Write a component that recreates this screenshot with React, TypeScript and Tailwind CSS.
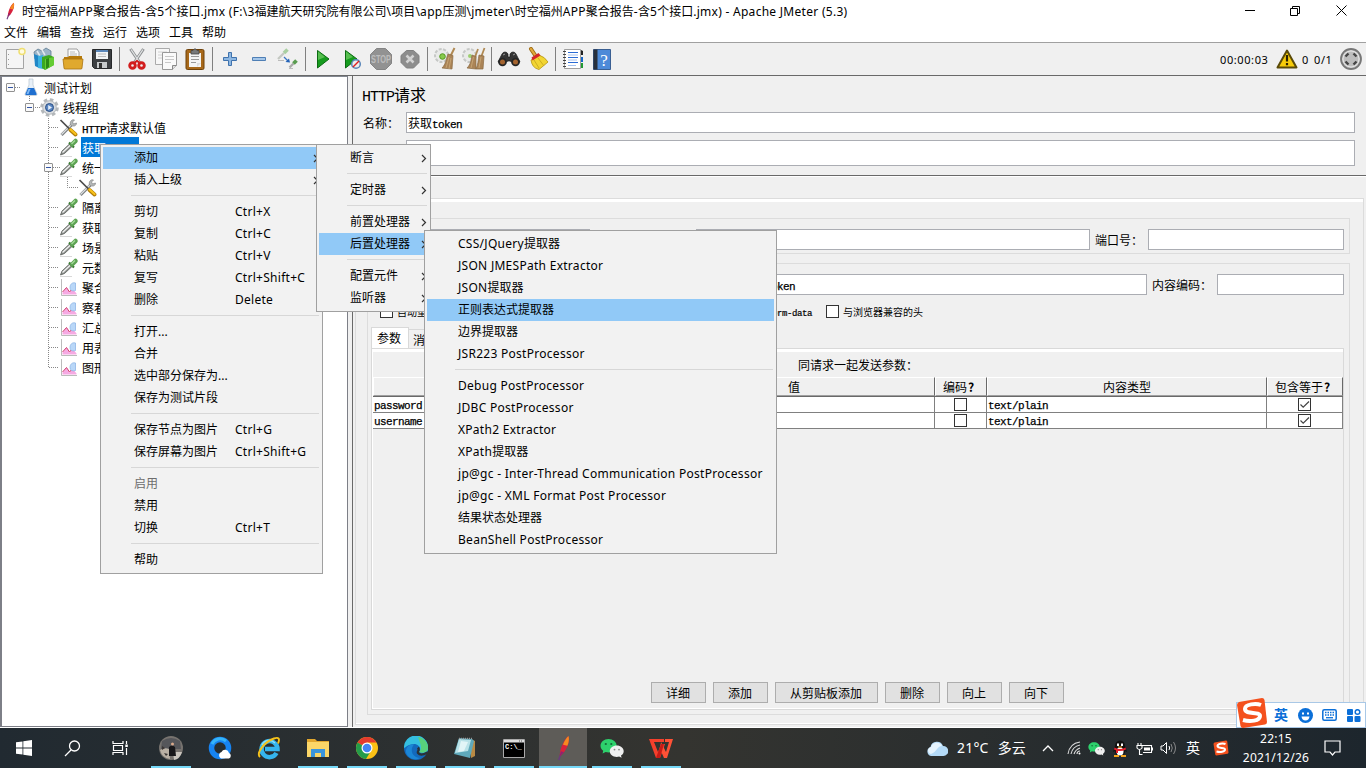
import type { ReactNode } from "react";
import clsx from "clsx";

type MenuEntry = {
  label?: string;
  shortcut?: string;
  arrow?: boolean;
  active?: boolean;
  disabled?: boolean;
};

const SEPARATOR: MenuEntry = {};

const contextMenu: MenuEntry[] = [
  { label: "添加", arrow: true, active: true },
  { label: "插入上级", arrow: true },
  SEPARATOR,
  { label: "剪切", shortcut: "Ctrl+X" },
  { label: "复制", shortcut: "Ctrl+C" },
  { label: "粘贴", shortcut: "Ctrl+V" },
  { label: "复写", shortcut: "Ctrl+Shift+C" },
  { label: "删除", shortcut: "Delete" },
  SEPARATOR,
  { label: "打开..." },
  { label: "合并" },
  { label: "选中部分保存为..." },
  { label: "保存为测试片段" },
  SEPARATOR,
  { label: "保存节点为图片", shortcut: "Ctrl+G" },
  { label: "保存屏幕为图片", shortcut: "Ctrl+Shift+G" },
  SEPARATOR,
  { label: "启用", disabled: true },
  { label: "禁用" },
  { label: "切换", shortcut: "Ctrl+T" },
  SEPARATOR,
  { label: "帮助" },
];

const addMenu: MenuEntry[] = [
  { label: "断言", arrow: true },
  SEPARATOR,
  { label: "定时器", arrow: true },
  SEPARATOR,
  { label: "前置处理器", arrow: true },
  { label: "后置处理器", arrow: true, active: true },
  SEPARATOR,
  { label: "配置元件", arrow: true },
  { label: "监听器", arrow: true },
];

const postProcessorMenu: MenuEntry[] = [
  { label: "CSS/JQuery提取器" },
  { label: "JSON JMESPath Extractor" },
  { label: "JSON提取器" },
  { label: "正则表达式提取器", active: true },
  { label: "边界提取器" },
  { label: "JSR223 PostProcessor" },
  SEPARATOR,
  { label: "Debug PostProcessor" },
  { label: "JDBC PostProcessor" },
  { label: "XPath2 Extractor" },
  { label: "XPath提取器" },
  { label: "jp@gc - Inter-Thread Communication PostProcessor" },
  { label: "jp@gc - XML Format Post Processor" },
  { label: "结果状态处理器" },
  { label: "BeanShell PostProcessor" },
];

const MONO = "text-[11px] tracking-[-0.6px] [-webkit-text-stroke:0.25px_currentColor]";

// Swing text: full-width glyphs at the font size, latin ones at half of it
const Sun = ({ children, latin = MONO }: { children: string; latin?: string }) => (
  <span className="whitespace-nowrap">
    {children.split(/([\x20-\x7e]+)/).map((part, i) =>
      i % 2 ? (
        <span key={i} className={clsx("font-['Liberation_Mono',monospace] leading-none", latin)}>
          {part}
        </span>
      ) : (
        part
      )
    )}
  </span>
);

// native window text, latin runs are set a little wider
const Ui = ({ children }: { children: string }) => (
  <span className="whitespace-pre">
    {children.split(/([\x20-\x7e]+)/).map((part, i) =>
      i % 2 && part !== "..." ? (
        <span key={i} className="tracking-[0.28px]">
          {part}
        </span>
      ) : (
        part
      )
    )}
  </span>
);

const Menu = ({
  items,
  className,
  shortcuts,
}: {
  items: MenuEntry[];
  className: string;
  shortcuts?: boolean;
}) => (
  <div className={clsx("absolute border border-[#a0a0a0] bg-[#f2f2f2] p-[2px]", className)}>
    {items.map((item, i) =>
      item.label ? (
        <div
          key={i}
          className={clsx(
            "flex h-[22px] items-center whitespace-pre pl-[31px] leading-[22px]",
            item.active && "bg-[#91c9f7]",
            item.disabled && "text-[#6d6d6d]"
          )}
        >
          <span className={clsx(shortcuts && "w-[101px]")}>
            <Ui>{item.label}</Ui>
          </span>
          {item.shortcut && <Ui>{item.shortcut}</Ui>}
          {item.arrow && (
            <svg className="ml-auto mr-px" width="6" height="9" viewBox="0 0 6 9">
              <path d="M1 1 4.500 4.500 1 8" fill="none" stroke="#333" strokeWidth="1.200" />
            </svg>
          )}
        </div>
      ) : (
        <div key={i} className="h-[10px] pl-[28px] pr-[1px] pt-[4px]">
          <div className="h-px w-full bg-[#d7d7d7]" />
        </div>
      )
    )}
  </div>
);

/* ---------- tree ---------- */

const Flask = () => (
  <svg width="18" height="18" viewBox="0 0 18 18">
    <path d="M7 1h4v6l4 9q0 1.500-1 1.500H4q-1 0-1-1.500l4-9z" fill="#e8f0f8" stroke="#b8c4d0" strokeWidth=".7" />
    <path d="M6 10h6l2.600 6q0 1-.6 1H4q-.6 0-.6-1z" fill="#1f6fd0" />
    <path d="M6.500 11h2l-2 5h-2z" fill="#7db8f4" />
  </svg>
);

const Gear = () => (
  <svg width="20" height="20" viewBox="0 0 20 20">
    <circle cx="9.500" cy="10.500" r="8" fill="none" stroke="#b4b8bb" strokeWidth="2.600" strokeDasharray="3.600 2.700" />
    <circle cx="9.500" cy="10.500" r="6.800" fill="#d8dbde" stroke="#a5a9ad" strokeWidth=".8" />
    <circle cx="9.500" cy="10.500" r="4" fill="#5b87c2" stroke="#2b4f85" />
    <path d="M8.200 8 12 10.500 8.200 13z" fill="#e6f0fb" />
  </svg>
);

const Tools = () => (
  <svg width="20" height="20" viewBox="0 0 20 20">
    <path d="m2.500 18 10-10" stroke="#7b7f80" strokeWidth="3" />
    <path d="m2.500 17.500 10-10" stroke="#dcdfe0" strokeWidth="1.300" />
    <path d="M11.500 8c-1-3 1-6 4-5l-2 2 1 2 3-1c0 3-3 4-6 2z" fill="#b5b9ba" stroke="#777" strokeWidth=".6" />
    <path d="m1.500 3 10 10" stroke="#4c4c4c" strokeWidth="1.700" />
    <path d="m11.500 13 5 4.500" stroke="#b07c06" strokeWidth="3.800" strokeLinecap="round" />
    <path d="m11.500 12.500 5 4.500" stroke="#f9c21b" strokeWidth="2.300" strokeLinecap="round" />
  </svg>
);

const Dropper = () => (
  <svg width="20" height="20" viewBox="0 0 20 20">
    <path d="M1 19.500h12" stroke="#d8d8d8" />
    <path d="m1.500 18 1.500-4 7.500-7 2.500 2.500-7.500 7z" fill="#8a8e8b" stroke="#5a5e5b" strokeWidth=".8" />
    <path d="m3.500 15.500 7.500-7" stroke="#f2f2f2" strokeWidth="1.300" />
    <path d="m10 5.500 5 5" stroke="#3c7a35" strokeWidth="2.200" />
    <path d="m13 7.500 3.500-3.500" stroke="#5da253" strokeWidth="4.500" strokeLinecap="round" />
    <path d="m12.500 7 3.500-3.500" stroke="#a2d897" strokeWidth="1.500" />
  </svg>
);

const Chart = () => (
  <svg width="18" height="18" viewBox="0 0 18 18">
    <path d="M1.500 1v16.500h15.500" fill="none" stroke="#aaa" strokeWidth=".8" />
    <path d="M2.500 16.500v-2l4-5 3 5 3-4 4 5v1z" fill="#f6a9e3" />
    <path d="m2.500 14 4-4.500 3 4.500 3-3.500" fill="none" stroke="#d0406c" strokeWidth="1" />
    <path d="M10 9.500c0-3 2-5.500 5.500-4.500v7.500c-3 1-5.500 0-5.500-3z" fill="#b9d7f8" stroke="#83aee2" strokeWidth=".7" />
  </svg>
);

const treeRows: { label: string; indent: string; icon: ReactNode; selected?: boolean }[] = [
  { label: "测试计划", indent: "pl-[19px]", icon: <Flask /> },
  { label: "线程组", indent: "pl-[38px]", icon: <Gear /> },
  { label: "HTTP请求默认值", indent: "pl-[57px]", icon: <Tools /> },
  { label: "获取token", indent: "pl-[57px]", icon: <Dropper />, selected: true },
  { label: "统一", indent: "pl-[57px]", icon: <Dropper /> },
  { label: "", indent: "pl-[76px]", icon: <Tools /> },
  { label: "隔离", indent: "pl-[57px]", icon: <Dropper /> },
  { label: "获取", indent: "pl-[57px]", icon: <Dropper /> },
  { label: "场景", indent: "pl-[57px]", icon: <Dropper /> },
  { label: "元数", indent: "pl-[57px]", icon: <Dropper /> },
  { label: "聚合", indent: "pl-[57px]", icon: <Chart /> },
  { label: "察看", indent: "pl-[57px]", icon: <Chart /> },
  { label: "汇总", indent: "pl-[57px]", icon: <Chart /> },
  { label: "用表", indent: "pl-[57px]", icon: <Chart /> },
  { label: "图形", indent: "pl-[57px]", icon: <Chart /> },
];

const TreeGuides = () => (
  <svg className="absolute left-0 top-px" width="90" height="300" viewBox="0 0 90 300">
    <g stroke="#888" strokeDasharray="1 1" fill="none">
      <path d="M13 9.500h6M27.500 18v6M33 29.500h6M46.500 40v250" />
      <path d="M47 49.500h10M47 69.500h10M51 89.500h7M47 129.500h10M47 149.500h10M47 169.500h10M47 189.500h10M47 209.500h10M47 229.500h10M47 249.500h10M47 269.500h10M47 289.500h10" />
      <path d="M65.500 99v10.500h11" />
    </g>
    {[
      [4.5, 5.5],
      [23.5, 25.5],
      [42.5, 85.5],
    ].map(([x, y]) => (
      <g key={x}>
        <rect x={x} y={y} width="8" height="8" rx=".5" fill="#fafafa" stroke="#919191" />
        <path d={`M${x + 1.5} ${y + 4}h5`} stroke="#3355a5" />
      </g>
    ))}
  </svg>
);

const Tree = () => (
  <div className="relative w-[348px] shrink-0 border border-l-2 border-[#7d7f87] border-t-[#828790] bg-white">
    <TreeGuides />
    <div className="relative">
      {treeRows.map((row, i) => (
        <div key={i} className={clsx("flex h-5 items-center", row.indent)}>
          <div className="flex w-5 shrink-0 justify-center">{row.icon}</div>
          <div
            className={clsx(
              "ml-[2px] h-5 pl-px leading-[22px]",
              row.selected && "w-[58px] bg-[#0078d7] text-white"
            )}
          >
            <Sun>{row.label}</Sun>
          </div>
        </div>
      ))}
    </div>
  </div>
);

/* ---------- toolbar ---------- */

const Ico = ({ children }: { children: ReactNode }) => (
  <svg className="shrink-0" width="24" height="24" viewBox="0 0 24 24">
    {children}
  </svg>
);

const Sep = () => <div className="h-6 w-px shrink-0 bg-[#808080]" />;

const Toolbar = () => (
  <div className="flex h-[34px] shrink-0 items-center gap-[5px] border-b border-t border-b-[#696969] border-t-[#a0a0a0] bg-[#f0f0f0] pl-[3px]">
    <Ico>
      <path d="M3.500 2.500h17v19h-17z" fill="#f5f5f5" stroke="#a4a4a4" />
      <path d="M5.500 7v12" stroke="#999" strokeDasharray="1 4" />
      <circle cx="19" cy="4.500" r="3" fill="#fffbe0" stroke="#efdf72" strokeWidth="1.500" />
    </Ico>
    <Ico>
      <path d="m2 5 4-3 4 2 4-3 5 3v8H3z" fill="#9bb4c8" stroke="#607c92" strokeWidth=".8" />
      <path d="m5 4 3 5M10 3l3 5" stroke="#dfe8ee" strokeWidth="1.500" />
      <path d="m2 7 5 2v12l-4-2z" fill="#1f86c7" />
      <path d="m6 9 5-1v14l-5-1z" fill="#3cb1e0" />
      <path d="m10 10 7-2 5 2v8l-9 5-3-2z" fill="#3ba81f" />
      <path d="m13 12 9-2v8l-9 5z" fill="#64cc33" />
      <path d="m14 12 3-1v9l-3 2z" fill="#2b8a15" />
    </Ico>
    <Ico>
      <path d="M7 2h9l2 3v8H7z" fill="#fafafa" stroke="#888" strokeWidth=".8" />
      <path d="M9 5h5M9 7h7M9 9h7" stroke="#aaa" strokeWidth=".8" />
      <path d="M3 10h4l1-1h13v12q0 1-1 1H4q-1 0-1-1z" fill="#b67a0b" />
      <path d="M2 12h20l-1 9q0 1-1 1H4q-1 0-1-1z" fill="#e0a92e" stroke="#a97411" strokeWidth=".8" />
    </Ico>
    <Ico>
      <path d="M2.500 2.500h19v19h-17l-2-2z" fill="#3d4043" stroke="#26282a" />
      <path d="M6 3h12v9H6z" fill="#f2f5f7" />
      <path d="M6 3h12v2H6z" fill="#5b88bb" />
      <path d="M8 7h8M8 9.500h8" stroke="#bbb" />
      <path d="M7 15h10v6H7z" fill="#c7cacc" />
      <path d="M9 16h3v5H9z" fill="#333" />
    </Ico>
    <Sep />
    <Ico>
      <path d="M5.500 2 15 16M18.500 2 9 16" stroke="#8b8e90" strokeWidth="3" />
      <path d="M6 2.500 15 16M18 2.500 9 16" stroke="#e1e3e4" strokeWidth="1.300" />
      <circle cx="7.500" cy="18.500" r="2.800" fill="#f0f0f0" stroke="#d21d1d" strokeWidth="2.900" />
      <circle cx="16.500" cy="18.500" r="2.800" fill="#f0f0f0" stroke="#d21d1d" strokeWidth="2.900" />
      <path d="m9 16 3-2 3 2" fill="none" stroke="#d21d1d" strokeWidth="2" />
    </Ico>
    <Ico>
      <path d="M1.500 1.500h14v16h-14z" fill="#f7f7f7" stroke="#aaa" />
      <path d="M4 5h9M4 8h9M4 11h5" stroke="#d0d0d0" />
      <path d="M8.500 5.500h14v13l-4 4h-10z" fill="#fafafa" stroke="#999" />
      <path d="M11 9.500h9M11 12.500h9M11 15.500h6" stroke="#c8c8c8" />
      <path d="M18.500 22.500v-4h4" fill="#ddd" stroke="#888" />
    </Ico>
    <Ico>
      <rect x="3" y="2.500" width="18" height="20" rx="1.500" fill="#a8691a" stroke="#6f420b" />
      <path d="M6 6h12v14H6z" fill="#f4f4f4" />
      <path d="M8 9.500h8M8 12.500h8M8 15.500h5" stroke="#999" />
      <path d="M8 3.500h2l2-2 2 2h2V7H8z" fill="#77797a" stroke="#444" strokeWidth=".8" />
      <path d="M14 20v-4h4" fill="#ddd" />
    </Ico>
    <Sep />
    <Ico>
      <path d="M10.500 5.500h3v5h5v3h-5v5h-3v-5h-5v-3h5z" fill="#8db7e2" stroke="#3f72ad" />
    </Ico>
    <Ico>
      <path d="M5.500 10.500h13v3h-13z" fill="#a4c6e9" stroke="#4f7fb5" />
    </Ico>
    <Ico>
      <path d="m2 12 6-6" stroke="#c4c8c2" strokeWidth="2.300" />
      <path d="m8 6 3.500-3.500" stroke="#a9cfa1" strokeWidth="3.500" />
      <path d="m13.500 20.500 4-4" stroke="#aaa" strokeWidth="2.300" />
      <path d="m17.500 16.500 3-3" stroke="#5a9c50" strokeWidth="3.800" />
      <path d="m8 10 4 4" stroke="#3b76c4" strokeWidth="1.200" />
      <path d="m14 15.500-4.500-.5 3.500-3.500z" fill="#2362b7" />
      <path d="M2 13.500h6M13 21.500h4" stroke="#bbb" />
    </Ico>
    <Sep />
    <Ico>
      <path d="M6.500 3.500 18 12 6.500 21z" fill="#169b1e" stroke="#0b6a12" />
      <path d="m7 4.500 7 5.500-7 3z" fill="#57bf50" />
    </Ico>
    <Ico>
      <path d="M5.500 3.500 17 12 5.500 21z" fill="#169b1e" stroke="#0b6a12" />
      <path d="m6 4.500 7 5.500-7 3z" fill="#57bf50" />
      <circle cx="16" cy="17" r="4.300" fill="#eee" stroke="#5a86b9" strokeWidth="1.500" />
      <path d="m13 20 6-6" stroke="#d22" strokeWidth="1.500" />
    </Ico>
    <Ico>
      <path d="M7.500 1.500h9l6 6v9l-6 6h-9l-6-6v-9z" fill="#929292" stroke="#848484" />
      <text x="12" y="15.500" textAnchor="middle" fontSize="10" fontWeight="700" fill="#bdbdbd" fontFamily="Liberation Sans" textLength="20" lengthAdjust="spacingAndGlyphs">
        STOP
      </text>
    </Ico>
    <Ico>
      <path d="M8.500 3.500h7l5.500 5v7l-5.500 5.500h-7L3 15.500v-7z" fill="#8d8d8d" stroke="#808080" />
      <path d="m8.500 8.500 7 7m0-7-7 7" stroke="#d2d2d2" strokeWidth="2.500" />
    </Ico>
    <Sep />
    <Ico>
      <circle cx="8.500" cy="8.500" r="6.500" fill="#e9eae9" stroke="#c6c8c6" strokeWidth="2" strokeDasharray="3 1.500" />
      <circle cx="9.500" cy="9.500" r="2.800" fill="#87c94c" stroke="#549b20" />
      <path d="m21.500 1-4 8" stroke="#b08952" strokeWidth="2" />
      <path d="m15 7 5 1.500-1 13.500-10-1c4-4 4-9 6-14z" fill="#ab8457" stroke="#8a6a42" strokeWidth=".7" />
      <path d="m16 10-3 11m5-10-2 11" stroke="#c6a473" />
    </Ico>
    <Ico>
      <circle cx="7.500" cy="8.500" r="6.500" fill="#e9eae9" stroke="#c6c8c6" strokeWidth="2" strokeDasharray="3 1.500" />
      <circle cx="8" cy="9" r="2" fill="#9ccf70" />
      <path d="m16 2-3 8m9.500-9-3 8" stroke="#b08952" strokeWidth="1.800" />
      <path d="m10 8 4 1.500v12.500l-9-1c4-4 4-8 5-13zM17 8l5 1-1 13h-7c2-4 2-9 3-14z" fill="#ab8457" stroke="#8a6a42" strokeWidth=".7" />
      <path d="m11.500 10-2.500 11m10-11-2 11" stroke="#c6a473" />
    </Ico>
    <Sep />
    <Ico>
      <path d="M5 7q1-2 3-2t3 2v3h2V7q1-2 3-2t3 2l4 8-5 2-5-3h-2l-5 3-5-2z" fill="#343434" stroke="#1a1a1a" strokeWidth=".7" />
      <circle cx="5.500" cy="15" r="4.300" fill="#252525" />
      <circle cx="5.500" cy="15" r="2.500" fill="#a5642f" />
      <circle cx="18.500" cy="15" r="4.300" fill="#252525" />
      <circle cx="18.500" cy="15" r="2.500" fill="#a5642f" />
      <path d="m6 8 2-1M16 8l2-1" stroke="#999" />
    </Ico>
    <Ico>
      <path d="m5 2 4 6" stroke="#9e6b12" strokeWidth="4" strokeLinecap="round" />
      <path d="m5 2 4 6" stroke="#e1a83c" strokeWidth="2.200" strokeLinecap="round" />
      <path d="m5 13 8-5q6 2 9 7l-9 7.500Q6 21 5 13z" fill="#f2d532" stroke="#b39411" strokeWidth=".8" />
      <path d="m8 13 5 8m-1-10 6 8" stroke="#cdae20" />
      <path d="m5.500 10.500 7-4.500 2 2.500-8 5z" fill="#d3262a" />
    </Ico>
    <Sep />
    <Ico>
      <path d="M3.500 2.500h16v19h-16z" fill="#fff" stroke="#888" strokeWidth=".8" />
      <path d="M20 3v5h2V4z" fill="#222" />
      <path d="M20 10h2v5h-2z" fill="#1566c9" />
      <path d="M20 16h2v5h-2z" fill="#229a33" />
      <path d="M7 5.500h10M7 10.500h10M7 15.500h10" stroke="#2a6bd4" strokeWidth="1.200" />
      <path d="M7 8h10M7 13h9M7 18.500h8" stroke="#8db0e8" strokeWidth=".8" />
      <path d="M2 4.500h3M2 7.500h3M2 10.500h3M2 13.500h3M2 16.500h3M2 19.500h3" stroke="#444" />
    </Ico>
    <Ico>
      <path d="M3.500 2.500h17v20h-17z" fill="#4d8ad8" stroke="#3a5f92" />
      <path d="M3.500 2.500h4v20h-4z" fill="#28303c" />
      <text x="14" y="18.500" textAnchor="middle" fontSize="17" fill="#fff" fontFamily="Liberation Serif">
        ?
      </text>
    </Ico>
    <div className="ml-auto flex items-center pr-[3px] text-[11px] leading-5">
      <span className="w-[57px] whitespace-nowrap pt-px tracking-[0.6px]">00:00:03</span>
      <svg className="-ml-px" width="22" height="20" viewBox="0 0 22 20">
        <path d="M11 1.500 20.500 18.500h-19z" fill="#f7cb08" stroke="#5a4a08" strokeWidth="2" strokeLinejoin="round" />
        <path d="M11 6v6.500M11 14v2.200" stroke="#2b2200" strokeWidth="2.200" />
      </svg>
      <span className="ml-[4px] w-[12px] pt-px">0</span>
      <span className="w-[25px] pt-px tracking-[0.6px]">0/1</span>
      <svg width="24" height="24" viewBox="0 0 24 24">
        <circle cx="12" cy="12" r="10" fill="#c9c9c9" stroke="#777" strokeWidth="1.800" />
        <circle cx="12" cy="12" r="8" fill="#bdbdbd" stroke="#e6e6e6" />
        <path d="M6.500 9.500 9.500 6.500M14.500 6.500l3 3M17.500 14.500l-3 3M9.500 17.500l-3-3" stroke="#444" strokeWidth="2.400" />
      </svg>
    </div>
  </div>
);

/* ---------- request editor ---------- */

const Field = ({ className, children }: { className?: string; children?: string }) => (
  <div className={clsx("h-[21px] shrink-0 border border-[#abadb3] bg-white px-px leading-[20px]", className)}>
    {children && <Sun>{children}</Sun>}
  </div>
);

const Check = ({ checked }: { checked?: boolean }) => (
  <svg className="shrink-0" width="13" height="13" viewBox="0 0 13 13">
    <rect x=".5" y=".5" width="12" height="12" fill="#fff" stroke="#333" />
    {checked && <path d="m2.500 6.500 2.700 2.700L11 3.500" fill="none" stroke="#444" strokeWidth="1.200" />}
  </svg>
);

const columns = [
  { label: "" },
  { label: "值" },
  { label: "编码", optional: true },
  { label: "内容类型" },
  { label: "包含等于", optional: true },
];
const grid = "grid grid-cols-[280px_282px_52px_280px_76px]";
const cell = "overflow-hidden border-b border-r border-[#808080]";

const ArgumentsTable = () => (
  <div className="w-[970px]">
    <div className={clsx(grid, "h-[20px] grid-rows-[19px] border-b border-[#696969] text-center")}>
      {columns.map((c, i) => (
        <div
          key={i}
          className="overflow-hidden whitespace-nowrap border border-b-[#a0a0a0] border-l-white border-r-[#696969] border-t-white leading-[17px]"
        >
          {c.label}
          {c.optional && <span className="inline-block w-3 pl-px text-left font-bold">?</span>}
        </div>
      ))}
    </div>
    {["password", "username"].map((name) => (
      <div key={name} className={clsx(grid, "h-4 grid-rows-[16px] bg-white leading-[14px]")}>
        <div className={clsx(cell, "pl-px")}>
          <Sun>{name}</Sun>
        </div>
        <div className={cell} />
        <div className={clsx(cell, "flex items-center justify-center")}>
          <Check />
        </div>
        <div className={clsx(cell, "pl-px")}>
          <Sun>text/plain</Sun>
        </div>
        <div className={clsx(cell, "flex items-center justify-center")}>
          <Check checked />
        </div>
      </div>
    ))}
  </div>
);

const buttons = [
  { label: "详细", width: "w-[55px]" },
  { label: "添加", width: "w-[55px]" },
  { label: "从剪贴板添加", width: "w-[103px]" },
  { label: "删除", width: "w-[55px]" },
  { label: "向上", width: "w-[55px]" },
  { label: "向下", width: "w-[55px]" },
];

const Editor = () => (
  <div className="ml-[4px] flex flex-1 flex-col border-l border-[#696969]">
    <div className="flex h-[99px] shrink-0 flex-col pl-[9px] pr-[11px]">
      <div className="mt-[6px] h-[26px] text-[16px] leading-[24px]">
        <Sun latin="text-[15px] tracking-[-1px]">HTTP请求</Sun>
      </div>
      <div className="mt-[4px] flex h-[21px] items-center">
        <span className="w-[44px] pl-px">名称：</span>
        <Field className="flex-1">获取token</Field>
      </div>
      <div className="mt-[7px] flex h-[26px] items-center pl-[44px]">
        <Field className="h-[26px]! flex-1" />
      </div>
    </div>
    <div className="h-px shrink-0 bg-[#696969]" />
    <div className="h-[22px] shrink-0 border-t border-white" />
    <div className="mb-[2px] ml-[2px] mr-[2px] flex flex-1 flex-col border border-[#dcdcdc] bg-white pb-px pt-[3px]">
      <div className="flex flex-1 flex-col bg-[#f0f0f0] pb-[8px] pl-[11px] pr-[13px] pt-[16px]">
        <div className="flex h-[36px] shrink-0 items-end border border-[#dcdcdc] pb-[3px] pl-[57px] pr-[5px]">
          <Field className="w-[165px]" />
          <Field className="ml-[106px] flex-1" />
          <span className="w-[58px] pl-[5px] leading-[21px]">端口号：</span>
          <Field className="w-[196px]" />
        </div>
        <div className="mt-[9px] flex flex-1 flex-col border border-[#dcdcdc] pb-[4px] pl-[3px] pr-[5px] pt-[10px]">
          <div className="flex h-[21px] shrink-0 items-center pl-[160px]">
            <Field className="flex-1 pl-[233px]!">token</Field>
            <span className="w-[70px] pl-[5px]">内容编码：</span>
            <Field className="w-[127px]" />
          </div>
          <div className="flex h-[32px] shrink-0 items-center text-[10px]">
            <div className="flex w-[446px] shrink-0 items-center gap-[4px] pl-[9px]">
              <Check />
              自动重
              <div className="ml-auto pr-[5px]">
                <Sun latin="text-[9px] tracking-[-0.4px] [-webkit-text-stroke:0.2px_currentColor]">form-data</Sun>
              </div>
            </div>
            <div className="flex items-center gap-[4px] pl-[9px]">
              <Check />
              与浏览器兼容的头
            </div>
          </div>
          <div className="flex h-[21px] shrink-0 items-end">
            <div className="h-[21px] w-[38px] border border-b-0 border-[#d9d9d9] bg-white pl-[5px] leading-[20px]">参数</div>
            <div className="h-[19px] w-[60px] border border-b-0 border-l-0 border-[#d9d9d9] pl-1 leading-[19px]">消</div>
          </div>
          <div className="flex flex-1 flex-col border border-[#d9d9d9] bg-white pb-px pl-px pt-[3px]">
            <div className="flex flex-1 flex-col bg-[#f0f0f0] pb-[5px]">
              <div className="h-[25px] pt-px text-center leading-6">同请求一起发送参数：</div>
              <ArgumentsTable />
              <div className="mt-auto flex justify-center gap-[7px] pr-[2px]">
                {buttons.map((b) => (
                  <div
                    key={b.label}
                    className={clsx("h-[21px] border border-[#adadad] bg-[#e1e1e1] text-center leading-[19px]", b.width)}
                  >
                    {b.label}
                  </div>
                ))}
              </div>
            </div>
          </div>
        </div>
      </div>
    </div>
  </div>
);

/* ---------- taskbar ---------- */

const Feather = ({ size }: { size: number }) => (
  <svg width={size} height={size} viewBox="0 0 24 24">
    <path d="M8 23 11 15" stroke="#6a3a80" strokeWidth="1.400" />
    <path d="M9 19c0-5 3-14 8-18 2 5-2 14-7 18z" fill="#d8223c" />
    <path d="M12 9c1-3 3-6 5-8 1 3 0 7-1 9z" fill="#f58a20" />
    <path d="m9 19 1-4 3 1-3 3z" fill="#8f2470" />
  </svg>
);

const WeChat = ({ size }: { size: number }) => (
  <svg width={size} height={size} viewBox="0 0 24 24">
    <path d="M8.500 3C4 3 .5 6 .5 9.800c0 2 1 3.800 2.700 5L2.600 17.500l3-1.500c1 .3 2 .4 3 .4 4.400 0 8-3 8-6.700S13 3 8.500 3z" fill="#2dd16c" />
    <path d="M16.800 9.500c-4 0-7 2.500-7 5.700s3 5.700 7 5.700c.8 0 1.600 0 2.300-.3l2.500 1.200-.6-2.200c1.700-1 2.700-2.700 2.700-4.400 0-3.200-3.100-5.700-6.900-5.700z" fill="#efefef" />
    <circle cx="5.800" cy="8" r="1.100" fill="#136b38" />
    <circle cx="11.300" cy="8" r="1.100" fill="#136b38" />
    <circle cx="14.500" cy="13.600" r=".9" fill="#888" />
    <circle cx="19" cy="13.600" r=".9" fill="#888" />
  </svg>
);

const SogouLogo = ({ size }: { size: number }) => (
  <svg width={size} height={size} viewBox="0 0 32 32">
    <path d="M3 5 26 1q2 0 2.500 2L31 25q0 2-2 2.500L7 31q-2 0-2.500-2L1 8q0-2 2-3z" fill="#f4511e" />
    <path d="M25 8c-5-2-16-1-16 4 0 6 15 2 15 7 0 5-10 6-17 4" fill="none" stroke="#fff" strokeWidth="4" />
  </svg>
);

const App48 = ({ children, active, running }: { children: ReactNode; active?: boolean; running?: boolean }) => (
  <div className={clsx("relative mr-px flex h-full w-12 shrink-0 items-center justify-center", active && "bg-[#5e5c58]")}>
    {children}
    {running && <div className={clsx("absolute bottom-0 h-[2px] bg-[#76d9f8]", active ? "w-12" : "w-10")} />}
  </div>
);

const Taskbar = () => (
  <div className="flex h-10 shrink-0 items-center bg-linear-to-r from-[#212a31] via-[#343430] to-[#1d262d] text-white">
    <div className="flex w-[147px] shrink-0 items-center">
      <div className="flex w-12 justify-center">
        <svg width="16" height="16" viewBox="0 0 16 16" fill="#fff">
          <path d="M0 2.300 6.500 1.400v6.200H0zM7.300 1.300 16 0v7.600H7.300zM0 8.400h6.500v6.200L0 13.700zM7.300 8.400H16V16l-8.700-1.300z" />
        </svg>
      </div>
      <div className="flex w-12 justify-center">
        <svg width="17" height="17" viewBox="0 0 17 17" fill="none" stroke="#fff" strokeWidth="1.300">
          <circle cx="10.500" cy="6" r="5" />
          <path d="M7 10 1 16" />
        </svg>
      </div>
      <div className="flex w-12 justify-center">
        <svg width="17" height="16" viewBox="0 0 17 16" fill="none" stroke="#fff" strokeWidth="1.200">
          <path d="M1 1v2.500h10V1M1.500 5.500h9v5h-9zM1 15v-2.500h10V15M14.500 1v3M14.500 8v7" />
          <path d="M13.300 4.500h2.500v2.500h-2.500z" fill="#fff" stroke="none" />
        </svg>
      </div>
    </div>
    <App48 running>
      <svg width="24" height="24" viewBox="0 0 24 24">
        <circle cx="12" cy="12" r="12" fill="#77736f" />
        <path d="M3 5q9-6 18 0l1 8H2z" fill="#55565a" />
        <path d="M1 14q5-3 9-1l1 10Q3 22 1 14z" fill="#b9b0a4" />
        <path d="M14 16h9q-2 7-8 8z" fill="#c9c4bd" />
        <path d="M10 11q3-3 6 0l1 9H10z" fill="#17171a" />
        <circle cx="13.500" cy="8" r="1.500" fill="#d9a98b" />
        <path d="m3 10 3 2-3 2zM5 17l4 1-2 2z" fill="#3b3634" />
      </svg>
    </App48>
    <App48>
      <svg width="24" height="24" viewBox="0 0 24 24">
        <circle cx="12" cy="12" r="8.500" fill="none" stroke="#1784f2" strokeWidth="5.500" />
        <path d="M4 8a9 9 0 0 1 14-3" fill="none" stroke="#35b4fa" strokeWidth="3" />
        <path d="M13 22.500a3.500 3.500 0 0 1 .5-6.500 4 4 0 0 1 7.500 1 3 3 0 0 1 0 5.500z" fill="#fff" />
      </svg>
    </App48>
    <App48>
      <svg width="24" height="24" viewBox="0 0 24 24">
        <path d="M19.500 17a8 8 0 1 1 1-4H8" fill="none" stroke="#35b5ee" strokeWidth="4.500" />
        <path d="M5 9a8 8 0 0 1 13-2" fill="none" stroke="#8be0fb" strokeWidth="1.500" />
        <path d="M3 21C-1 17 7 6 17 2.500c5-1.800 6 .5 4 5" fill="none" stroke="#f5c21b" strokeWidth="1.900" />
      </svg>
    </App48>
    <App48 running>
      <svg width="24" height="24" viewBox="0 0 24 24">
        <path d="M1 3h8l2 2h12v16H1z" fill="#e2a72e" />
        <path d="M1 6h22v15H1z" fill="#fbd668" />
        <path d="M5 21v-8h14v8h-4v-4H9v4z" fill="#3b95dc" />
      </svg>
      <div className="absolute bottom-0 right-[4px] h-[2px] w-[9px] bg-[#4f93a8]" />
    </App48>
    <App48 running>
      <svg width="24" height="24" viewBox="0 0 24 24">
        <circle cx="12" cy="12" r="11" fill="#fbc116" />
        <path d="M12 12 2.500 6.500A11 11 0 0 1 21.500 6.500H12z" fill="#e33b2e" />
        <path d="M12 12 2.500 6.500A11 11 0 0 0 11 23l5.500-9z" fill="#249c4a" />
        <circle cx="12" cy="12" r="5.500" fill="#fff" />
        <circle cx="12" cy="12" r="4.300" fill="#4285f4" />
      </svg>
    </App48>
    <App48 running>
      <svg width="24" height="24" viewBox="0 0 24 24">
        <circle cx="12" cy="12" r="12" fill="#1369bd" />
        <path d="M0 12A12 12 0 0 1 24 11c1 5-3 7-9 5 3-3 0-8-5-8-6 0-9 4-10 4z" fill="#35bfe0" />
        <path d="M14 1c8 1 12 9 9 14-2 2-6 2-8 1 4-4 1-9-1-15z" fill="#58d07c" />
        <path d="M10 8.500c-5 6-1 13 6 13.500-8 4-15-3-14-8 1-4 4-6 8-5.500z" fill="#1b86d6" />
        <path d="M14 11.500c2 3-1 3.500 0 5.500 2 2.500 6 1.500 9.500-.5" fill="none" stroke="#2b3236" strokeWidth="2.300" />
      </svg>
    </App48>
    <App48 running>
      <svg width="24" height="24" viewBox="0 0 24 24">
        <path d="m18 3 4 2v15l-4 2z" fill="#b98a44" />
        <path d="M6 2 19 3l2 2-4 17L1 18z" fill="#5fa9bb" />
        <path d="M6 3 18 4l-3 11-13 2z" fill="#b9e2e8" />
        <path d="m8 5 7 1-4 9-6 1z" fill="#e2f5f7" />
        <path d="M6 2.500h14" stroke="#999" strokeWidth="1.500" strokeDasharray="1 1" />
      </svg>
    </App48>
    <App48 running>
      <svg width="24" height="24" viewBox="0 0 24 24">
        <path d="M1.500 3.500h21v18h-21z" fill="#000" stroke="#aaa" />
        <path d="M2 4h20v2.500H2z" fill="#ddd" />
        <path d="M17 5h4" stroke="#555" strokeDasharray="1 1" />
        <text x="3" y="12.500" fontSize="7" fontWeight="700" fill="#fff" fontFamily="Liberation Mono">
          C:\_
        </text>
      </svg>
    </App48>
    <App48 active running>
      <Feather size={26} />
    </App48>
    <App48 running>
      <WeChat size={24} />
    </App48>
    <App48 running>
      <svg width="24" height="24" viewBox="0 0 24 24">
        <path d="M0 3h15v3H5l4 10 3-8h4l-5 14H7z" fill="#f5402c" />
        <path d="m12 6 5 10 3-10h-4V3h8l-6 19h-3l-4-9z" fill="#ff5136" />
        <path d="m7 22 5-14h3l-4 14z" fill="#c81a16" />
      </svg>
    </App48>

    <div className="ml-auto flex items-center">
      <svg width="22" height="17" viewBox="0 0 22 17">
        <path d="M5 16a4.700 4.700 0 0 1-.5-9A6.500 6.500 0 0 1 17 6a5 5 0 0 1 .5 10z" fill="#b4daf7" />
        <path d="M5 7a6 6 0 0 1 11-1c-5 0-5 6-11 8-4-1-4-6 0-7z" fill="#e6f4fe" />
      </svg>
      <div className="ml-[9px] flex w-[83px] gap-[9px] whitespace-pre text-[14px] leading-5">
        <span className="tracking-[0.2px]">21°C</span>
        <span>多云</span>
      </div>
      <svg className="ml-[2px]" width="12" height="7" viewBox="0 0 12 7" fill="none" stroke="#fff" strokeWidth="1.300">
        <path d="m1 6 5-5 5 5" />
      </svg>
      <svg className="ml-[13px]" width="14" height="14" viewBox="0 0 14 14" fill="none" stroke="#ddd" strokeWidth="1.100">
        <path d="M1 13C2 6 6 2 13 1M4 13c1-5 4-8 9-9M7 13c1-3 3-5 6-6M10 13c0-2 1-3 3-3" />
        <circle cx="12.500" cy="12.500" r="1" fill="#fff" stroke="none" />
      </svg>
      <div className="ml-[7px]">
        <WeChat size={17} />
      </div>
      <svg className="ml-[7px]" width="16" height="17" viewBox="0 0 16 17">
        <path d="M3 6a5 5.500 0 0 1 10 0l2 6-2-1q0 5-5 5t-5-5l-2 1z" fill="#111" />
        <ellipse cx="8" cy="11.500" rx="3.500" ry="4" fill="#fff" />
        <path d="M2.500 7.500q5.500 3 11 0l.5 2q-6 3-12 0zM4 9h2v4H4z" fill="#e5202c" />
        <path d="M5 3.500h2v2.500H5zM9 3.500h2v2.500H9z" fill="#fff" />
        <path d="M2 15h5v2H2zM9 15h5v2H9zM6 6.500h4v1H6z" fill="#f5a51d" />
      </svg>
      <svg className="ml-[8px]" width="17" height="13" viewBox="0 0 17 13" fill="none" stroke="#fff" strokeWidth="1.100">
        <path d="M6 3.500h9.500v7H7M3.500 8v4.500h3M1 3.500h5V6q-2.500 3-5 0zM2 1v2M5 1v2M16.500 5.500v3" />
        <path d="M8 5.500h6v3H8z" fill="#fff" stroke="none" />
      </svg>
      <svg className="ml-[7px]" width="17" height="14" viewBox="0 0 17 14" fill="none" stroke="#fff">
        <path d="M1 5h2l3.500-3.500v11L3 9H1zM9 5q1.300 2 0 4" />
        <path d="M11 3q2.500 4 0 8M13.500 1q4 6 0 12" stroke="#88898a" />
      </svg>
      <span className="ml-[9px] text-[14px] leading-5">英</span>
      <div className="ml-[13px]">
        <SogouLogo size={16} />
      </div>
      <div className="ml-[9px] w-[76px] text-center text-[12px] leading-[19px] tracking-[0.25px]">
        <div>22:15</div>
        <div>2021/12/26</div>
      </div>
      <svg className="ml-[10px] mr-[25px]" width="17" height="16" viewBox="0 0 17 16" fill="none" stroke="#fff" strokeWidth="1.200">
        <path d="M1 1h15v11h-5l-2.500 3L6 12H1z" />
      </svg>
    </div>
  </div>
);

const ImeBar = () => (
  <div className="absolute left-[1236px] top-[697px] flex h-[31px] w-[130px] items-end">
    <div className="flex h-[26px] w-full items-center gap-[10px] border border-[#a9c8e6] bg-white pl-[37px] text-[#0b6fd8]">
      <span className="text-[14px] font-bold leading-5">英</span>
      <svg width="15" height="15" viewBox="0 0 15 15">
        <circle cx="7.500" cy="7.500" r="7.500" fill="#0b6fd8" />
        <path d="M3.500 8.500h8q-.5 4-4 4t-4-4z" fill="#fff" />
        <path d="M4 4.500h2V6.500H4zM9 4.500h2V6.500H9z" fill="#fff" />
      </svg>
      <svg className="-ml-px" width="15" height="12" viewBox="0 0 15 12">
        <rect x=".8" y=".8" width="13.400" height="10.400" rx="1.500" fill="#fff" stroke="#0b6fd8" strokeWidth="1.500" />
        <path d="M3 3.500h9M3 6h9" stroke="#0b6fd8" strokeWidth="1.500" strokeDasharray="1.500 1" />
        <path d="M4 8.700h7" stroke="#0b6fd8" strokeWidth="1.300" />
      </svg>
      <svg width="14" height="13" viewBox="0 0 14 13" fill="#0b6fd8">
        <rect width="6" height="6" rx="1" />
        <rect y="7" width="6" height="6" rx="1" />
        <rect x="7.500" y="7" width="6" height="6" rx="1" />
        <circle cx="10.500" cy="3" r="2.300" fill="none" stroke="#0b6fd8" strokeWidth="1.500" />
      </svg>
    </div>
    <div className="absolute left-0 top-0">
      <SogouLogo size={32} />
    </div>
  </div>
);

const menus = ["文件", "编辑", "查找", "运行", "选项", "工具", "帮助"];

const App = () => {
  return (
    <div className="relative flex h-[768px] w-[1366px] flex-col overflow-hidden bg-white font-['Noto_Sans','Noto_Sans_CJK_SC',sans-serif] text-[12px] text-black">
      <div className="flex h-[22px] shrink-0 items-center">
        <div className="ml-px w-[21px]">
          <Feather size={18} />
        </div>
        <div className="pt-[2px] leading-[20px]">
          <Ui>
            {
              "时空福州APP聚合报告-含5个接口.jmx (F:\\3福建航天研究院有限公司\\项目\\app压测\\jmeter\\时空福州APP聚合报告-含5个接口.jmx) - Apache JMeter (5.3)"
            }
          </Ui>
        </div>
        <svg className="ml-auto mr-[18px]" width="104" height="12" viewBox="0 0 104 12" fill="none" stroke="#000">
          <path d="M1 5.500h10M46.500 3.500h7v7h-7zM48.500 3v-1.500h7v7H54" />
          <path d="m92.500.5 10 10m0-10-10 10" />
        </svg>
      </div>
      <div className="flex h-5 shrink-0 items-center gap-[9px] pl-[4px] pt-[2px] leading-[18px]">
        {menus.map((m) => (
          <span key={m}>{m}</span>
        ))}
      </div>
      <Toolbar />
      <div className="flex h-[651px] shrink-0 bg-[#f0f0f0] font-['Noto_Sans_CJK_SC',sans-serif]">
        <Tree />
        <Editor />
      </div>
      <div className="h-px shrink-0 bg-white" />
      <Taskbar />
      <Menu items={contextMenu} shortcuts className="left-[100px] top-[144px] w-[223px]" />
      <Menu items={addMenu} className="left-[316px] top-[144px] w-[115px]" />
      <Menu items={postProcessorMenu} className="left-[424px] top-[230px] w-[353px]" />
      <ImeBar />
    </div>
  );
};

export default App;
